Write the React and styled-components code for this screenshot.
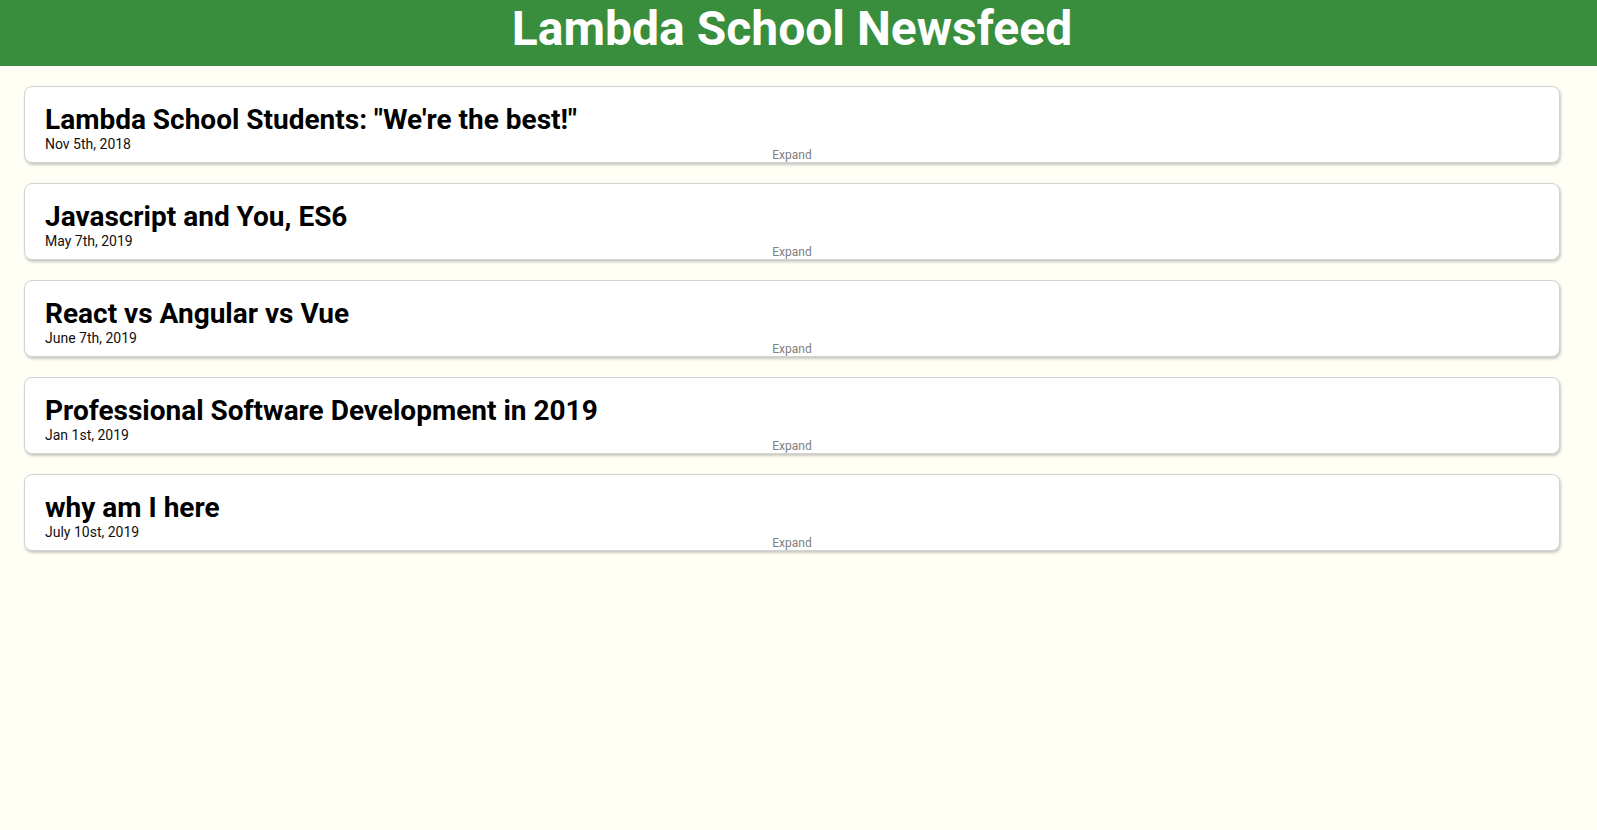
import styled, { createGlobalStyle } from "styled-components";

const articles = [
  { id: 1, title: 'Lambda School Students: "We\'re the best!"', date: "Nov 5th, 2018" },
  { id: 2, title: "Javascript and You, ES6", date: "May 7th, 2019" },
  { id: 3, title: "React vs Angular vs Vue", date: "June 7th, 2019" },
  { id: 4, title: "Professional Software Development in 2019", date: "Jan 1st, 2019" },
  { id: 5, title: "why am I here", date: "July 10st, 2019" },
];

const App = () => {
  return (
    <>
      <GlobalStyle />
      <Header>
        <H1>Lambda School Newsfeed</H1>
      </Header>
      <Articles>
        {articles.map((article) => (
          <Article key={article.id}>
            <Title>{article.title}</Title>
            <DateText>{article.date}</DateText>
            <ExpandButton>Expand</ExpandButton>
          </Article>
        ))}
      </Articles>
    </>
  );
};

export default App;

const GlobalStyle = createGlobalStyle`
  html, body {
    margin: 0;
    padding: 0;
    background-color: #fffff5;
    font-family: Roboto, "Liberation Sans", sans-serif;
  }
`;

const Header = styled.header`
  background-color: #388e3c;
  height: 66px;
  box-sizing: border-box;
  padding: 1px 13px 0 0;
  text-align: center;
`;

const H1 = styled.h1`
  margin: 0;
  color: white;
  font-size: 48px;
  font-weight: 700;
  line-height: 56px;
`;

const Articles = styled.div`
  display: flex;
  flex-direction: column;
  gap: 20px;
  padding: 20px 37px 20px 24px;
`;

const Article = styled.div`
  display: flex;
  flex-direction: column;
  box-sizing: border-box;
  background-color: white;
  border: 1px solid #d3d3d3;
  border-radius: 8px;
  box-shadow: 1px 2px 3px rgba(0, 0, 0, 0.22);
  padding: 16px 20px 0 20px;
`;

const Title = styled.h2`
  margin: 0;
  font-size: 28px;
  font-weight: 700;
  line-height: 33px;
  color: #000;
`;

const DateText = styled.p`
  margin: 0;
  font-size: 14px;
  line-height: 16px;
  color: #111;
`;

const ExpandButton = styled.span`
  align-self: center;
  margin-top: -4px;
  font-size: 12px;
  line-height: 14px;
  color: #808080;
  cursor: pointer;
`;
